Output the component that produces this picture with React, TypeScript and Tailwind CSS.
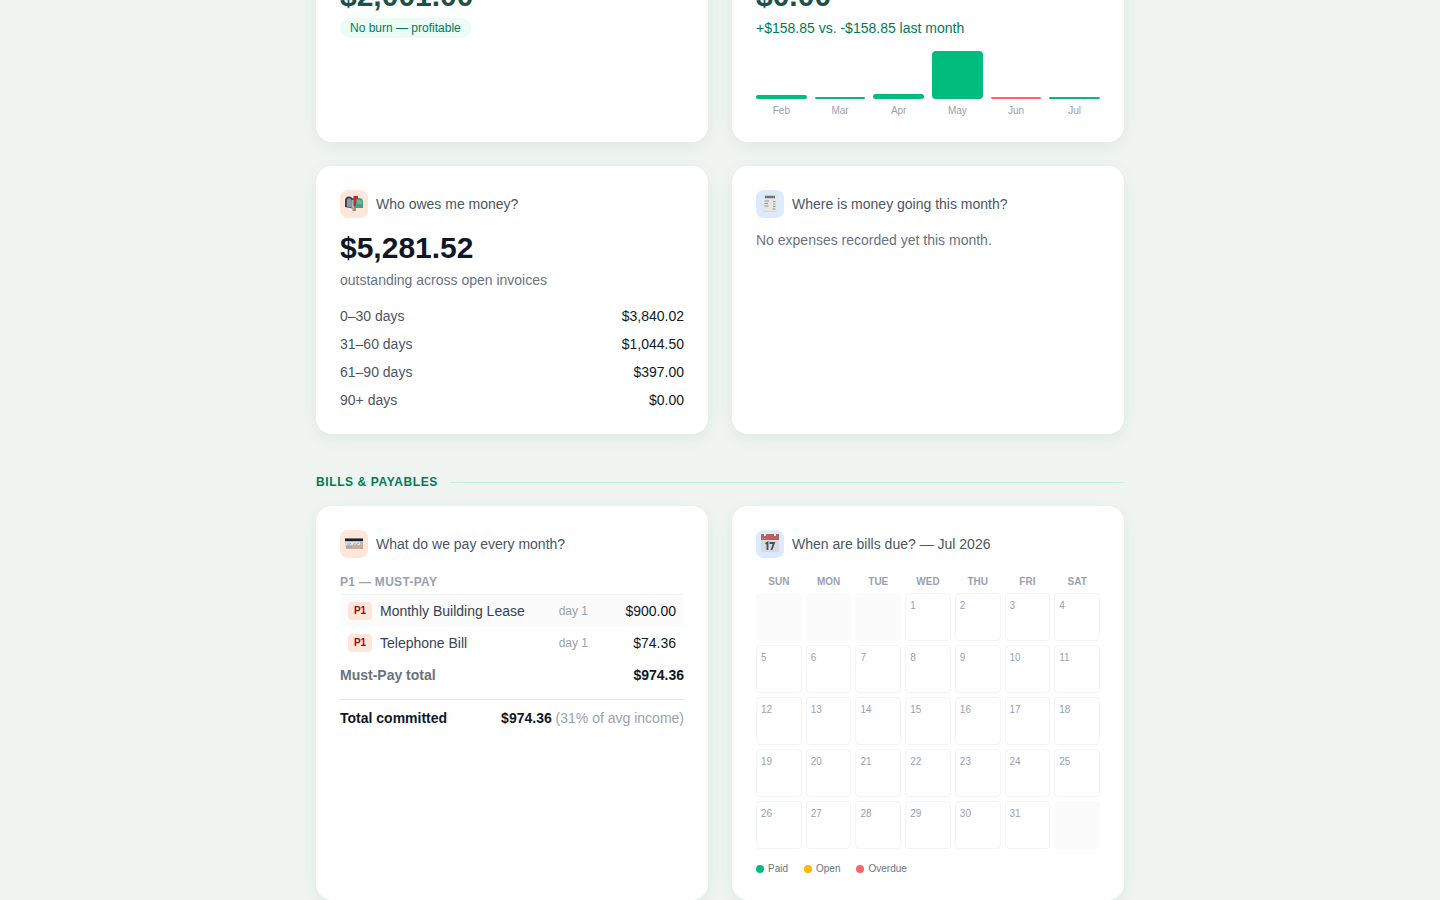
import type { ReactNode } from "react";

const months = [
  { label: "Feb", height: 4, positive: true },
  { label: "Mar", height: 2, positive: true },
  { label: "Apr", height: 5, positive: true },
  { label: "May", height: 48, positive: true },
  { label: "Jun", height: 2, positive: false },
  { label: "Jul", height: 2, positive: true },
];

const aging = [
  ["0–30 days", "$3,840.02"],
  ["31–60 days", "$1,044.50"],
  ["61–90 days", "$397.00"],
  ["90+ days", "$0.00"],
];

const bills = [
  { name: "Monthly Building Lease", day: "day 1", amount: "$900.00" },
  { name: "Telephone Bill", day: "day 1", amount: "$74.36" },
];

const weekdays = ["Sun", "Mon", "Tue", "Wed", "Thu", "Fri", "Sat"];

const legend = [
  { label: "Paid", color: "bg-[#00bc7d]" },
  { label: "Open", color: "bg-[#ffb900]" },
  { label: "Overdue", color: "bg-[#ff6467]" },
];

// July 2026 starts on a Wednesday
const weeks = Array.from({ length: 5 }, (_, w) =>
  Array.from({ length: 7 }, (_, d) => {
    const day = w * 7 + d - 2;
    return day >= 1 && day <= 31 ? day : null;
  })
);

function MailboxIcon() {
  return (
    <svg viewBox="0 0 18 18" className="size-[18px]" aria-hidden="true">
      <path d="M7.500 13h3.500v4H7.500z" fill="#b98672" />
      <path d="M5 4h9a4 4 0 0 1 4 4v6H5z" fill="#4a9c83" />
      <path d="M12 6h3a2.500 2.500 0 0 1 2 2v2h-5z" fill="#65b79b" />
      <path d="M0 13V7c0-2.800 1.500-4.500 4-4.500S8 4.200 8 7v7.500z" fill="#343d50" />
      <path d="M1.800 12.500V7.500c0-2 .8-3.200 2.400-3.200s2.300 1.200 2.300 3.200v6z" fill="#8b9ba9" />
      <path d="M6.500 6H9v8.500H6.500z" fill="#a7b8bd" />
      <path d="M8.500 2H13v3h-2v7H8.500z" fill="#ca2730" />
    </svg>
  );
}

function ReceiptIcon() {
  return (
    <svg viewBox="0 0 18 18" className="size-[18px]" aria-hidden="true">
      <path d="M2 0h14v18H2z" fill="#e7e7e4" />
      <path d="M2.500 17.500h13" stroke="#c9cccd" strokeDasharray="1 1" />
      <path d="M4 3h10" stroke="#5b646b" strokeWidth="2.500" strokeDasharray="1.800 .3" />
      <path d="M3.500 7h4.500M3.500 9.500h3.500M3.500 12h4M12 7.500h2.500M12 10h2.500M12 12.500h2.500M11.500 15h3" stroke="#8c9294" />
    </svg>
  );
}

function CardIcon() {
  return (
    <svg viewBox="0 0 18 18" className="size-[18px]" aria-hidden="true">
      <path d="M0 4.500h18V15H1z" fill="#b9b9ba" />
      <path d="M8 11h10v4H5z" fill="#ceaa94" />
      <path d="M0 4.500h18V7H0z" fill="#182033" />
      <path d="M1 8h14v3H1z" fill="#e4e2e0" />
      <path d="M2 10h3l1-1M8 10.500l2-1 1 1 3-1.500M1 13h6" stroke="#7f929e" strokeWidth=".8" fill="none" />
    </svg>
  );
}

function CalendarIcon() {
  return (
    <svg viewBox="0 0 18 18" className="size-[18px]" aria-hidden="true">
      <path d="M0 0h18v18H0z" fill="#d9dadd" />
      <path d="M0 0h18v6H0z" fill="#b96060" />
      <path d="M3 0h2v2H3zM13 0h2v2h-2z" fill="#f0e5e2" />
      <path d="M1 4.500h1M3 4.500h1" stroke="#d69080" />
      <path d="M4.500 9.800l2-1.200V16M8.500 9H13l-2.600 7" stroke="#454d5c" strokeWidth="1.800" fill="none" />
    </svg>
  );
}

function Card({ children }: { children: ReactNode }) {
  return (
    <section className="rounded-2xl bg-white p-6 shadow-[0_4px_16px_rgba(0,100,80,0.07)]">{children}</section>
  );
}

function CardTitle({ icon, tint, children }: { icon: ReactNode; tint: string; children: ReactNode }) {
  return (
    <header className="mb-3 flex items-center gap-2">
      <span className={`flex size-7 items-center justify-center rounded-lg pb-0.5 ${tint}`}>{icon}</span>
      <h3 className="text-sm text-gray-600">{children}</h3>
    </header>
  );
}

function CashFlowChart() {
  return (
    <div className="mt-3 flex h-17 items-end gap-2">
      {months.map((m) => (
        <div key={m.label} className="flex flex-1 flex-col gap-1">
          <div
            className={`rounded-sm ${m.positive ? "bg-[#00bc7d]" : "bg-[#ff6467]"}`}
            style={{ height: m.height }}
          />
          <span className="text-center text-[10px] leading-[15px] text-gray-400">{m.label}</span>
        </div>
      ))}
    </div>
  );
}

function RecurringBills() {
  return (
    <div className="pt-1">
      <h4 className="border-b border-gray-100 pb-1 text-xs font-bold tracking-wide text-gray-400">
        P1 — MUST-PAY
      </h4>
      <table className="w-full text-sm">
        <tbody>
          {bills.map((bill) => (
            <tr key={bill.name} className="h-8 odd:bg-[#fafbfa]">
              <td className="w-8 rounded-l-md pl-2">
                <span className="block w-6 rounded-sm bg-[#ffe6da] py-0.5 text-center text-[10px] leading-[14px] font-bold text-red-800">
                  P1
                </span>
              </td>
              <td className="pl-2 text-[#364153]">{bill.name}</td>
              <td className="text-right text-xs text-gray-400">{bill.day}</td>
              <td className="w-24 rounded-r-md pr-2 text-right text-gray-900">{bill.amount}</td>
            </tr>
          ))}
        </tbody>
      </table>
      <div className="flex justify-between py-1.5 text-sm font-bold">
        <span className="text-gray-500">Must-Pay total</span>
        <span className="text-gray-900">$974.36</span>
      </div>
      <div className="mt-2 flex justify-between border-t border-gray-200 pt-2 text-sm">
        <span className="font-bold text-gray-900">Total committed</span>
        <span className="text-gray-400">
          <strong className="text-gray-900">$974.36</strong> (31% of avg income)
        </span>
      </div>
    </div>
  );
}

function BillCalendar() {
  return (
    <div className="pt-1">
      <table className="flex flex-col gap-1 text-[10px] leading-[15px] text-gray-400">
        <thead>
          <tr className="grid grid-cols-7 gap-1">
            {weekdays.map((d) => (
              <th key={d} className="text-center font-bold uppercase">{d}</th>
            ))}
          </tr>
        </thead>
        <tbody className="flex flex-col gap-1">
          {weeks.map((week, w) => (
            <tr key={w} className="grid grid-cols-7 gap-1">
              {week.map((day, d) =>
                day ? (
                  <td key={d} className="h-12 rounded-sm border border-gray-100 p-1">{day}</td>
                ) : (
                  <td key={d} className="h-12 rounded-sm bg-[#fbfbfb]" />
                )
              )}
            </tr>
          ))}
        </tbody>
      </table>
      <ul className="mt-3 flex gap-4 text-[10px] leading-[15px] text-gray-500">
        {legend.map((item) => (
          <li key={item.label} className="flex items-center gap-1">
            <span className={`size-2 rounded-full ${item.color}`} />
            {item.label}
          </li>
        ))}
      </ul>
    </div>
  );
}

export default function App() {
  return (
    <div className="min-h-screen overflow-hidden bg-[#eff4f0] font-['Liberation_Sans',Arial,sans-serif]">
      <main className="mx-auto max-w-[808px]">
        <div className="-mt-[46px] grid grid-cols-2 gap-6">
          <Card>
            <p className="text-3xl font-bold text-[#1d5048]">$2,001.00</p>
            <p className="mt-1 w-fit rounded-full bg-emerald-50 px-2.5 py-0.5 text-xs text-emerald-700">
              No burn — profitable
            </p>
          </Card>
          <Card>
            <p className="text-3xl font-bold text-[#1d5048]">$0.00</p>
            <p className="mt-1 text-sm text-emerald-700">+$158.85 vs. -$158.85 last month</p>
            <CashFlowChart />
          </Card>
          <Card>
            <CardTitle icon={<MailboxIcon />} tint="bg-[#ffe6da]">Who owes me money?</CardTitle>
            <p className="text-3xl font-bold text-gray-900">$5,281.52</p>
            <p className="mt-1 text-sm text-gray-500">outstanding across open invoices</p>
            <dl className="mt-4 flex flex-col gap-2 text-sm">
              {aging.map(([range, amount]) => (
                <div key={range} className="flex justify-between">
                  <dt className="text-gray-600">{range}</dt>
                  <dd className="text-gray-900">{amount}</dd>
                </div>
              ))}
            </dl>
          </Card>
          <Card>
            <CardTitle icon={<ReceiptIcon />} tint="bg-blue-100">Where is money going this month?</CardTitle>
            <p className="text-sm text-gray-500">No expenses recorded yet this month.</p>
          </Card>
        </div>

        <div className="mt-10 mb-4 flex items-center gap-3">
          <h2 className="text-xs font-bold tracking-wider text-emerald-700">BILLS &amp; PAYABLES</h2>
          <div className="h-px flex-1 bg-[#c3f2df]" />
        </div>

        <div className="grid grid-cols-2 gap-6">
          <Card>
            <CardTitle icon={<CardIcon />} tint="bg-[#ffe6da]">What do we pay every month?</CardTitle>
            <RecurringBills />
          </Card>
          <Card>
            <CardTitle icon={<CalendarIcon />} tint="bg-blue-100">When are bills due? — Jul 2026</CardTitle>
            <BillCalendar />
          </Card>
        </div>
      </main>
    </div>
  );
}
